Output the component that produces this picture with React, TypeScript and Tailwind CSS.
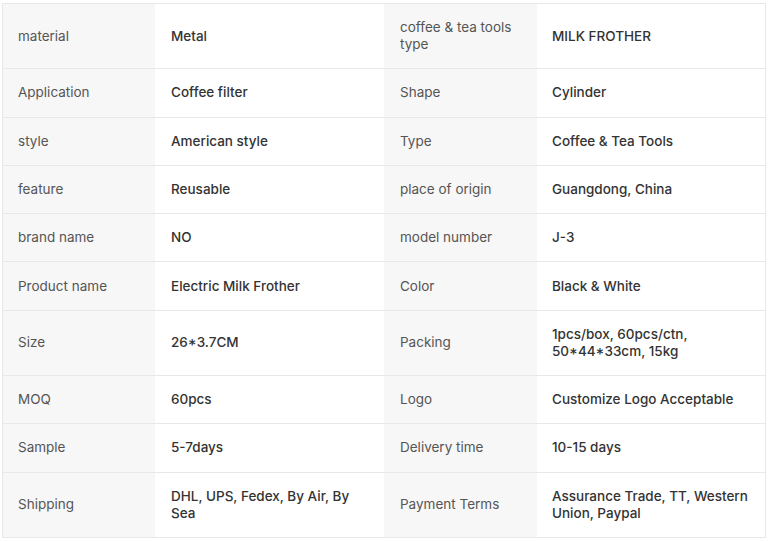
const rows: [string, string, string, string][] = [
  ['material', 'Metal', 'coffee & tea tools type', 'MILK FROTHER'],
  ['Application', 'Coffee filter', 'Shape', 'Cylinder'],
  ['style', 'American style', 'Type', 'Coffee & Tea Tools'],
  ['feature', 'Reusable', 'place of origin', 'Guangdong, China'],
  ['brand name', 'NO', 'model number', 'J-3'],
  ['Product name', 'Electric Milk Frother', 'Color', 'Black & White'],
  ['Size', '26*3.7CM', 'Packing', '1pcs/box, 60pcs/ctn, 50*44*33cm, 15kg'],
  ['MOQ', '60pcs', 'Logo', 'Customize Logo Acceptable'],
  ['Sample', '5-7days', 'Delivery time', '10-15 days'],
  ['Shipping', 'DHL, UPS, Fedex, By Air, By Sea', 'Payment Terms', 'Assurance Trade, TT, Western Union, Paypal'],
];

export default function App() {
  return (
    <div className="w-[768px] h-[541px] bg-white pt-[3px] pl-[2px] font-['Inter',sans-serif] text-[13.5px] leading-[17px]">
      <div className="w-[764px] border border-[#e8e8e8]">
        {rows.map((r, i) => (
          <div
            key={i}
            className={`grid grid-cols-[152px_229px_153px_1fr] ${i > 0 ? 'border-t border-[#e8e8e8]' : ''}`}
          >
            <div className="bg-[#f7f7f7] px-[15px] py-[15.15px] text-[#555] flex items-center">{r[0]}</div>
            <div className="bg-white px-[16px] py-[15.15px] pr-[10px] text-[#333] font-medium flex items-center">{r[1]}</div>
            <div className="bg-[#f7f7f7] px-[16px] py-[15.15px] text-[#555] flex items-center">{r[2]}</div>
            <div className="bg-white px-[15px] py-[15.15px] pr-[10px] text-[#333] font-medium flex items-center">{r[3]}</div>
          </div>
        ))}
      </div>
    </div>
  );
}
